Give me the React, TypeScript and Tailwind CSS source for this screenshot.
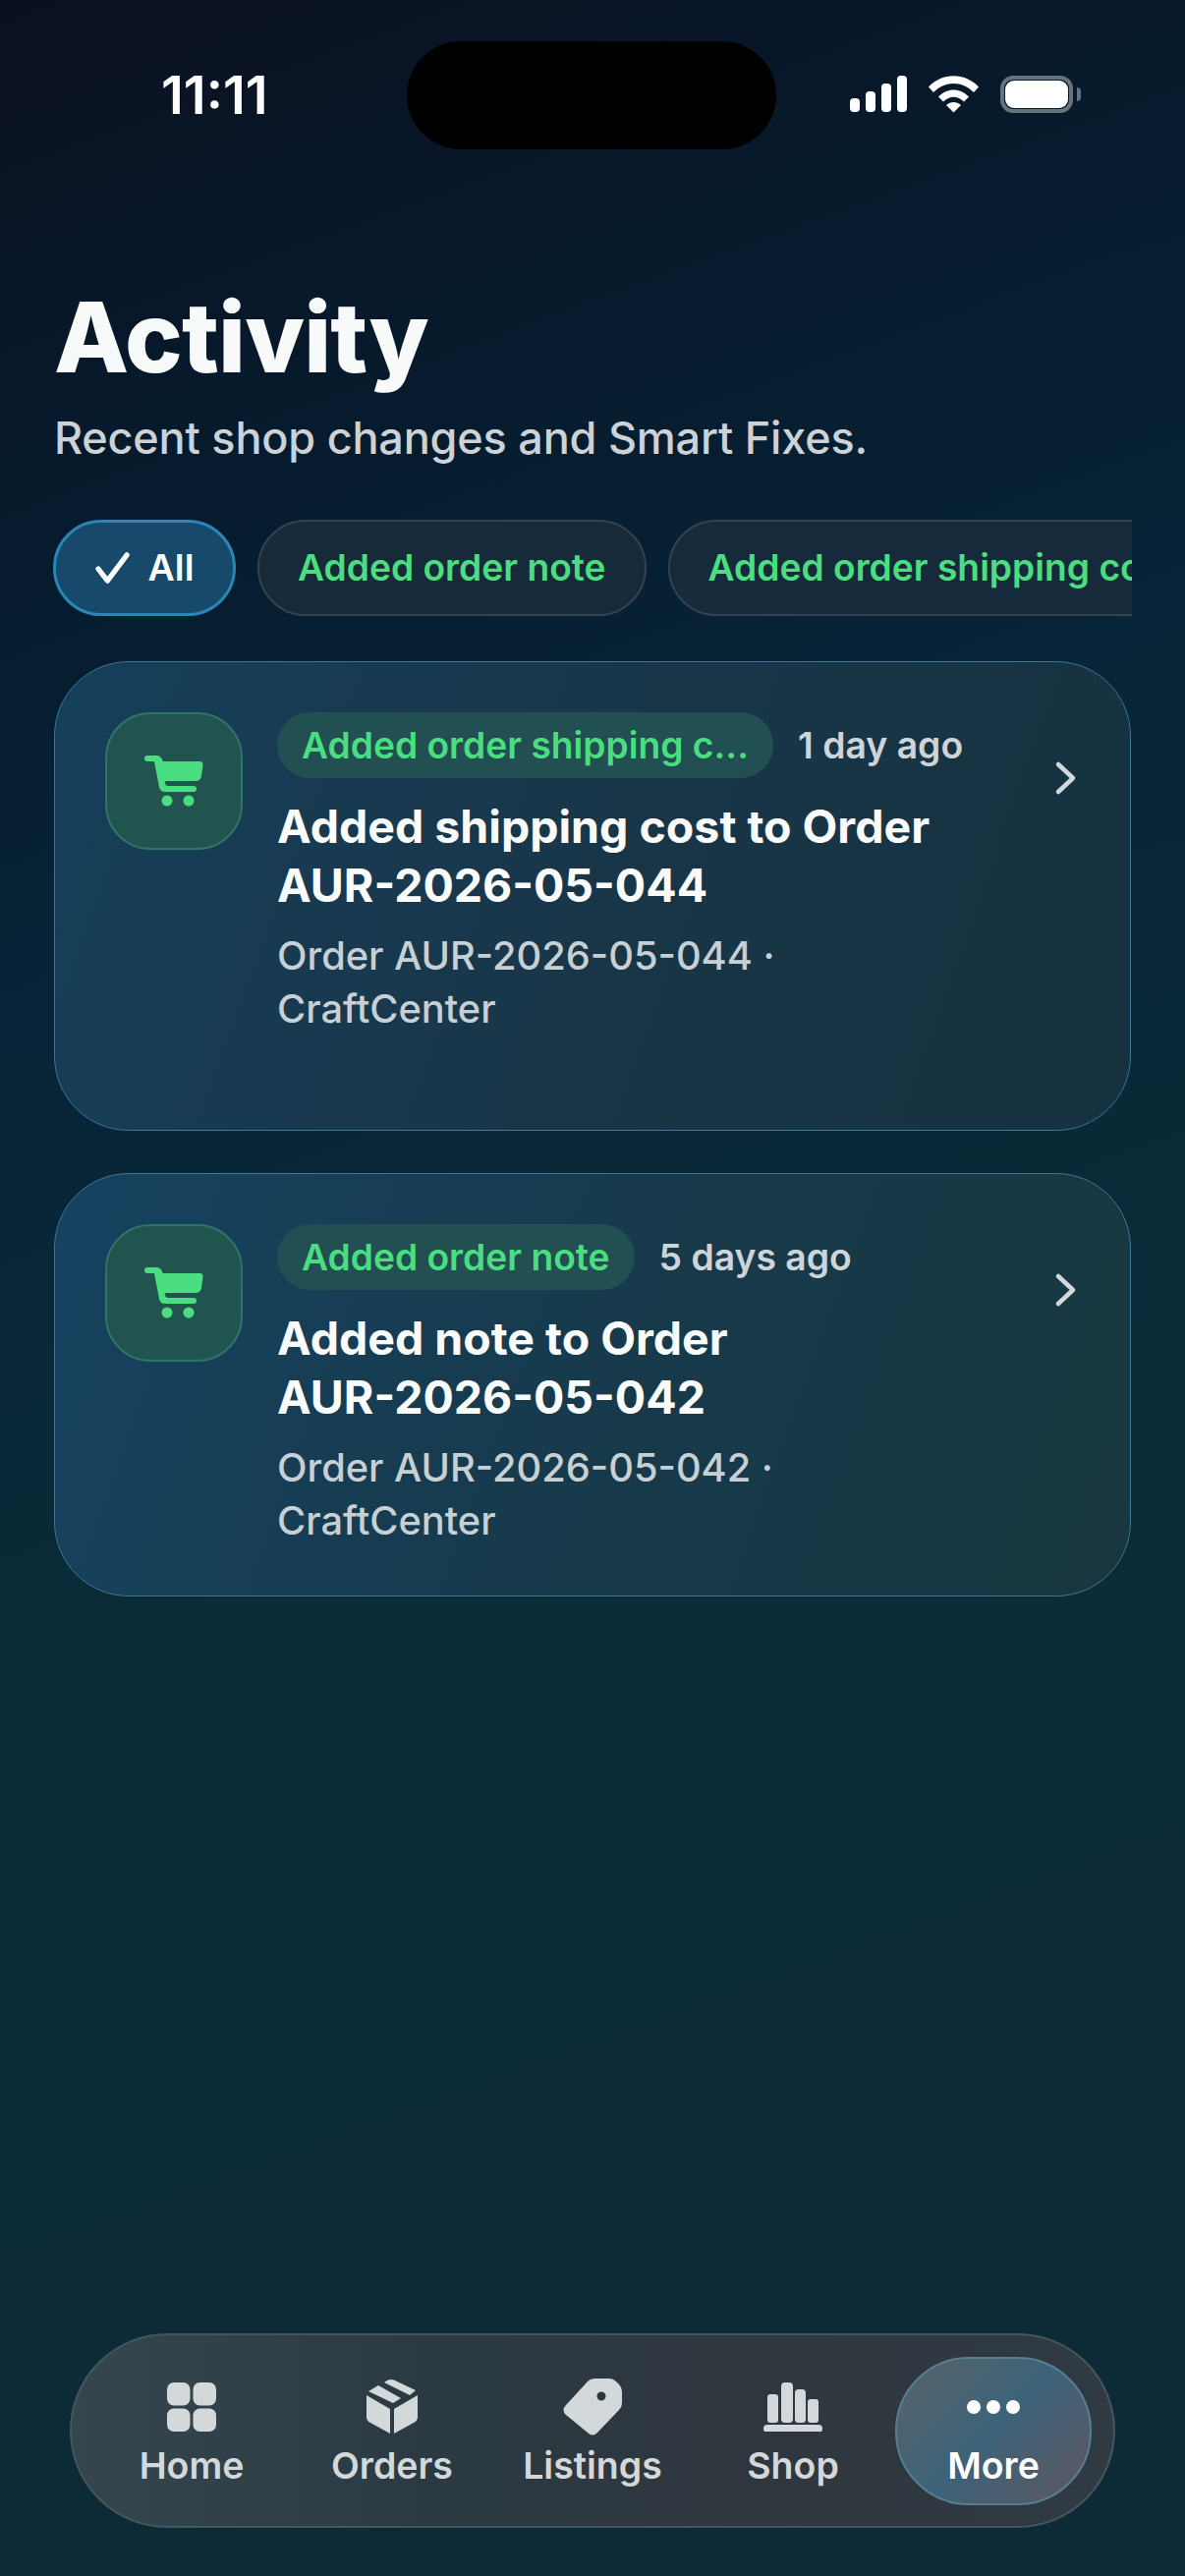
import React from "react";

function Cart() {
  return (
    <svg width="60" height="52" viewBox="0 0 60 52" fill="#4ade80">
      <rect x="0" y="0" width="16" height="6" rx="3" />
      <path d="M9 1H14Q17 1 18 4L18.500 6H56Q60 6 59.500 10L58 21Q57 26 52 26H22Q20 26 21 28Q21.500 31 24 31H50Q53 31 53 34Q53 37 50 37H21Q16 37 15 32L10 6Z" />
      <circle cx="23" cy="46" r="5.500" />
      <circle cx="45" cy="46" r="5.500" />
    </svg>
  );
}

function Chevron() {
  return (
    <svg width="24" height="36" viewBox="0 0 24 36" fill="none" stroke="#d2d8db" strokeWidth="4.500" strokeLinecap="round" strokeLinejoin="round">
      <path d="M4 4l15 14L4 32" />
    </svg>
  );
}

function Card({ badge, time, title1, title2, sub, h, cls }: { badge: string; time: string; title1: string; title2: string; sub: string; h: string; cls: string }) {
  return (
    <div className={`flex rounded-[76px] border-[1.5px] border-[#3a7896] pl-[51px] pt-[51px] ${h} ${cls}`}>
      <div className="flex size-[140px] shrink-0 items-center justify-center rounded-[46px] border-2 border-[#2f7468] bg-[#21544f]">
        <Cart />
      </div>
      <div className="ml-[35px] w-[660px] shrink-0">
        <div className="flex items-center">
          <span className="flex h-[67px] items-center rounded-[34px] bg-[#214f52] px-[25px] text-[37.200px] font-semibold leading-none whitespace-nowrap text-[#4ade80]">{badge}</span>
          <span className="ml-[25px] text-[37.300px] font-semibold leading-none whitespace-nowrap text-[#ced5d9]">{time}</span>
        </div>
        <div className="mt-[19px] text-[46.500px] leading-[60px] font-[750] text-[#fafbfb]">
          <div className="whitespace-nowrap">{title1}</div>
          <div className="whitespace-nowrap">{title2}</div>
        </div>
        <div className="mt-[15px] text-[39.800px] leading-[54px] font-medium text-[#c7d0d4]">
          <div className="whitespace-nowrap">{sub}</div>
          <div>CraftCenter</div>
        </div>
      </div>
      <div className="ml-[131px] mt-[49px] shrink-0">
        <Chevron />
      </div>
    </div>
  );
}

function Tab({ label, icon, active }: { label: string; icon: React.ReactNode; active?: boolean }) {
  return (
    <div className="flex w-[204px] shrink-0 flex-col items-center">
      <div className="flex h-[64px] items-center justify-center pt-[5px]">{icon}</div>
      <div className={`mt-[8px] text-[37.500px] leading-[46px] font-semibold ${active ? "text-white" : "text-[#d3d8da]"}`}>{label}</div>
    </div>
  );
}

const HomeIcon = (
  <svg width="50" height="50" viewBox="0 0 50 50" fill="#d3d8da">
    <rect x="0" y="0" width="23.500" height="23.500" rx="7" />
    <rect x="26.500" y="0" width="23.500" height="23.500" rx="7" />
    <rect x="0" y="26.500" width="23.500" height="23.500" rx="7" />
    <rect x="26.500" y="26.500" width="23.500" height="23.500" rx="7" />
  </svg>
);

const BoxIcon = (
  <svg width="52" height="55" viewBox="0 0 52 55" fill="#d3d8da">
    <path d="M18 3L21 1Q25 -1 29 1L50 11L44 16Z" />
    <path d="M2 12L12 6L35 19L27 24Z" />
    <path d="M0 16L24 30V55L4 44Q0 42 0 38Z" />
    <path d="M28 30L52 16V38Q52 42 48 44L28 55Z" />
  </svg>
);

const TagIcon = (
  <svg width="60" height="58" viewBox="0 0 60 58" fill="#d3d8da">
    <path fillRule="evenodd" d="M25 3Q28 0 32 0H47Q51 0 54 3L57 6Q60 9 60 13V25Q60 29 57 32L35 55Q30 60 25 55L3 37Q-2 32 3 27ZM39 13.500a4.500 4.500 0 1 0 0 9a4.500 4.500 0 0 0 0-9Z" />
  </svg>
);

const ShopIcon = (
  <svg width="60" height="50" viewBox="0 0 60 50" fill="#d3d8da">
    <rect x="4" y="12" width="11" height="29" rx="3" />
    <rect x="18" y="0" width="12" height="41" rx="4" />
    <rect x="32" y="7" width="11" height="34" rx="3.500" />
    <rect x="45" y="17" width="11" height="24" rx="3" />
    <rect x="0" y="43" width="60" height="8" rx="4" />
  </svg>
);

const MoreIcon = (
  <svg width="56" height="16" viewBox="0 0 56 16" fill="#ffffff">
    <circle cx="8" cy="8" r="7" />
    <circle cx="28" cy="8" r="7" />
    <circle cx="48" cy="8" r="7" />
  </svg>
);

export default function App() {
  return (
    <div className="flex h-[2622px] w-[1206px] flex-col overflow-hidden bg-[linear-gradient(160deg,#0b1020_0%,#061b2d_18%,#082438_34%,#0b2c37_60%,#0d2a36_100%)] font-['Inter','Liberation_Sans',sans-serif]">
      <div className="flex h-[110px] shrink-0 items-center pl-[164px] mt-[42px]">
        <div className="w-[250px] text-[54px] leading-none font-semibold text-white">11:11</div>
        <div className="h-[110px] w-[376px] shrink-0 rounded-[55px] bg-black" />
        <div className="ml-[75px] flex items-center mt-[-2px]">
          <svg width="58" height="38" viewBox="0 0 58 38" fill="#fff">
            <rect x="0" y="23" width="10" height="14" rx="4" />
            <rect x="16" y="16" width="10" height="21" rx="4" />
            <rect x="32" y="8" width="10" height="29" rx="4" />
            <rect x="48" y="0" width="10" height="37" rx="4" />
          </svg>
          <svg className="ml-[22px]" width="51" height="38" viewBox="0 0 51 38" fill="#fff">
            <path d="M0 11.500C14-3.500 37-3.500 51 11.500L46 17C34 5 17 5 5 17z" />
            <path d="M10 21.500C19 12 32 12 41 21.500L36 26.500C29.500 20 21.500 20 15 26.500z" />
            <path d="M18 30c4.500-4 10.500-4 15 0l-7.500 7.500z" />
          </svg>
          <div className="ml-[22px] flex h-[38px] w-[74px] items-center justify-center rounded-[13px] border-[4px] border-[#66727c] p-[1px]">
            <div className="h-[28px] w-full rounded-[9px] bg-white" />
          </div>
          <div className="ml-[4px] h-[14px] w-[4px] rounded-r-[4px] bg-[#66727c]" />
        </div>
      </div>

      <div className="mt-[131px] pl-[55px] text-[99px] leading-[120px] font-extrabold tracking-[-0.900px] text-[#f8fafa]">Activity</div>
      <div className="mt-[16px] pl-[55px] text-[45px] leading-[54px] font-medium tracking-[-0.200px] text-[#ccd2d6]">Recent shop changes and Smart Fixes.</div>

      <div className="mx-[54px] mt-[56px] flex gap-[22px] overflow-hidden">
        <div className="flex h-[98px] w-[186px] shrink-0 items-center justify-center rounded-[49px] border-[3px] border-[#2b86b8] bg-[#16496a] text-[37.500px] font-semibold text-white">
          <svg width="36" height="32" viewBox="0 0 38 34" fill="none" stroke="#fff" strokeWidth="5.500" strokeLinecap="round" strokeLinejoin="round" className="mr-[18px]">
            <path d="M3 18l10 13L34 3" />
          </svg>
          All
        </div>
        <div className="flex h-[98px] shrink-0 items-center rounded-[49px] border-2 border-[#33434f] bg-[#172a39] px-[39px] text-[37.200px] font-semibold whitespace-nowrap text-[#4ade80]">Added order note</div>
        <div className="flex h-[98px] shrink-0 items-center rounded-[49px] border-2 border-[#33434f] bg-[#172a3c] px-[39px] text-[37.200px] font-semibold whitespace-nowrap text-[#4ade80]">Added order shipping cost</div>
      </div>

      <div className="mx-[55px] mt-[46px] flex flex-col gap-[43px]">
        <Card h="h-[478px]" cls="bg-[linear-gradient(110deg,#163f5a_0%,#193649_50%,#16323f_100%)]" badge="Added order shipping c..." time="1 day ago" title1="Added shipping cost to Order" title2="AUR-2026-05-044" sub="Order AUR-2026-05-044 ·" />
        <Card h="h-[431px]" cls="bg-[linear-gradient(110deg,#164260_0%,#173a4c_50%,#18373f_100%)]" badge="Added order note" time="5 days ago" title1="Added note to Order" title2="AUR-2026-05-042" sub="Order AUR-2026-05-042 ·" />
      </div>

      <div className="mx-[71px] mb-[49px] mt-auto flex h-[198px] items-center rounded-[99px] border-2 border-[#46565e] bg-[linear-gradient(90deg,#36464e_0%,#2b3a42_35%,#2f363e_65%,#2f3a42_100%)] pl-[20px]">
        <Tab label="Home" icon={HomeIcon} />
        <Tab label="Orders" icon={BoxIcon} />
        <Tab label="Listings" icon={TagIcon} />
        <Tab label="Shop" icon={ShopIcon} />
        <div className="ml-[2px] flex h-[151px] w-[200px] shrink-0 items-center justify-center rounded-[75px] border-2 border-[#55808f] bg-[linear-gradient(135deg,#5a626a_0%,#3c6379_50%,#5f5560_100%)]">
          <Tab label="More" icon={MoreIcon} active />
        </div>
      </div>
    </div>
  );
}
